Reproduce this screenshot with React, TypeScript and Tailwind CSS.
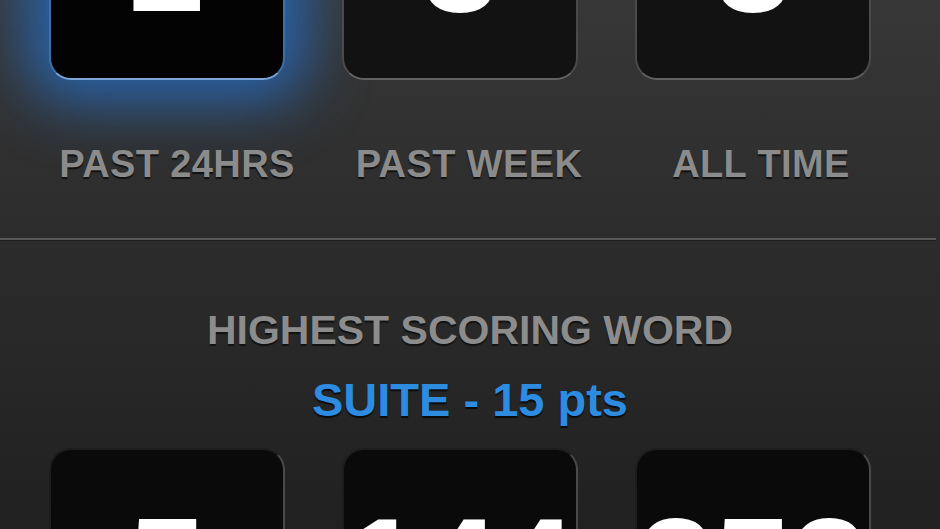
import React from 'react';

type Stat = { value: string; label?: string; active?: boolean };

const topStats: Stat[] = [
  { value: '2', label: 'PAST 24HRS', active: true },
  { value: '3', label: 'PAST WEEK' },
  { value: '3', label: 'ALL TIME' },
];

const bottomStats: Stat[] = [{ value: '5' }, { value: '144' }, { value: '353' }];

const font = { fontFamily: '"Liberation Sans", Arial, Helvetica, sans-serif' };

const StatBox: React.FC<{ stat: Stat; dark?: boolean }> = ({ stat, dark }) => {
  const base =
    'w-[236px] h-[235px] rounded-[22px] flex items-center justify-center border-2 text-white font-bold text-[138px] leading-none';
  if (stat.active) {
    return (
      <div
        className={`${base} bg-[#030303] border-[#1c3a5e] border-b-[#7aa6da] border-l-[#3f6fa8] border-r-[#3f6fa8] shadow-[0_0_60px_22px_rgba(38,112,204,0.8)]`}
      >
        {stat.value}
      </div>
    );
  }
  return (
    <div
      className={`${base} ${
        dark
          ? 'bg-[#0a0a0a] border-[#1d1d1d] border-r-[#4a4a4a] border-b-[#555]'
          : 'bg-[#121212] border-[#2a2a2a] border-l-[#4a4a4a] border-r-[#4a4a4a] border-b-[#626262]'
      }`}
    >
      {stat.value}
    </div>
  );
};

export default function App() {
  return (
    <div
      className="w-[940px] h-[529px] overflow-hidden bg-gradient-to-b from-[#373737] via-[#2b2b2b] to-[#212121]"
      style={font}
    >
      {/* Top counters, cut off by the viewport */}
      <div className="mt-[-155px] pl-[49px] flex gap-[57px]">
        {topStats.map((s, i) => (
          <StatBox key={i} stat={s} />
        ))}
      </div>

      {/* Labels */}
      <div className="mt-[65px] pl-[22px] grid grid-cols-[292px_292px_292px]">
        {topStats.map((s, i) => (
          <div
            key={i}
            className="pl-[18px] text-center font-bold text-[38px] leading-[38px] tracking-[0.4px] text-[#8b8b8b] [text-shadow:0_2px_1px_#111]"
          >
            {s.label}
          </div>
        ))}
      </div>

      {/* Divider */}
      <div className="mt-[55px] w-[936px] h-[2px] bg-[#575757] border-b border-[#1e1e1e] box-content" />

      <div className="mt-[69px] text-center font-bold text-[41px] leading-[41px] text-[#8c8c8c] [text-shadow:0_2px_1px_#111]">
        HIGHEST SCORING WORD
      </div>
      <div className="mt-[25px] text-center font-bold text-[47px] leading-[48px] text-[#2e8ce0] [text-shadow:0_2px_1px_#0b0b0b]">
        SUITE - 15 pts
      </div>

      {/* Bottom counters */}
      <div className="mt-[24px] pl-[49px] flex gap-[57px]">
        {bottomStats.map((s, i) => (
          <StatBox key={i} stat={s} dark />
        ))}
      </div>
    </div>
  );
}
